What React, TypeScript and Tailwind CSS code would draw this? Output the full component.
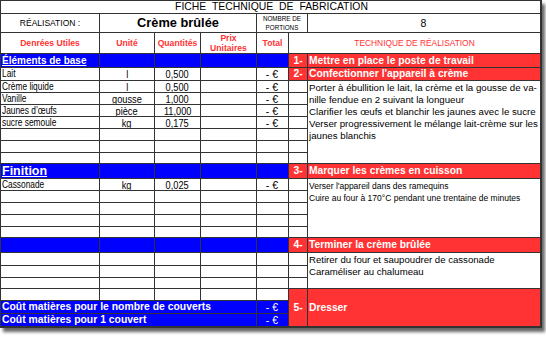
import React from "react";

const cell = "border-r border-b border-[#333] flex items-center overflow-hidden whitespace-nowrap";
const cellR = "border-r-2 border-b border-[#333] flex items-center overflow-hidden whitespace-nowrap";

function blanks(n: number, key: string, extra = "") {
  return Array.from({ length: n }, (_, i) => (
    <div key={key + i} className={`${cell} ${extra}`} />
  ));
}

function blueRow(key: string) {
  return Array.from({ length: 4 }, (_, i) => (
    <div key={key + i} className={`${cell} bg-[#0000ff]`} />
  ));
}

const items: [string, string, string][] = [
  ["Lait", "l", "0,500"],
  ["Crème liquide", "l", "0,500"],
  ["Vanille", "gousse", "1,000"],
  ["Jaunes d’œufs", "pièce", "11,000"],
  ["sucre semoule", "kg", "0,175"],
];

function ItemRow({ it }: { it: [string, string, string] }) {
  return (
    <>
      <div className={`${cell} pl-px text-[10.2px]`}>
        <span className="inline-block origin-left scale-x-[0.82]">{it[0]}</span>
      </div>
      <div className={`${cell} justify-center text-[10.5px]`}>
        <span className="inline-block scale-x-[0.88]">{it[1]}</span>
      </div>
      <div className={`${cell} justify-center text-[10.5px]`}>
        <span className="inline-block scale-x-[0.88]">{it[2]}</span>
      </div>
      <div className={cell} />
      <div className={`${cell} justify-end pr-[10px] text-[10.5px]`}>- €</div>
    </>
  );
}

export default function App() {
  const red = "bg-[#ff3333] text-white font-bold text-[10.3px]";
  return (
    <div className="bg-white w-[546px] h-[340px] font-['Liberation_Sans',Arial,sans-serif] text-black">
      <div
        className="grid w-fit border-l border-t border-[#333] shadow-[3px_4px_3px_rgba(0,0,0,0.6)] grid-cols-[99px_55px_46px_56px_32px_19px_234px] grid-rows-[13px_19px_21px_14px_13px_12px_12px_12px_12px_12px_12px_11px_15px_12px_12px_12px_12px_11px_15px_13px_12px_11px_12px_13px_14px] leading-[12px]"
      >
        {/* Row 1 */}
        <div className={`${cellR} col-span-7 justify-center text-[10.4px] [word-spacing:3px] pl-[2px]`}>
          FICHE TECHNIQUE DE FABRICATION
        </div>

        {/* Row 2 */}
        <div className={`${cell} justify-center text-[8.5px]`}>RÉALISATION :</div>
        <div className={`${cell} col-span-3 justify-center text-[12.8px] font-bold`}>Crème brûlée</div>
        <div className={`${cell} col-span-2 justify-center text-center text-[6.3px] leading-[9px] whitespace-normal`}>
          NOMBRE DE
          <br />
          PORTIONS
        </div>
        <div className={`${cellR} justify-center text-[10.5px] pr-px`}>8</div>

        {/* Row 3 headers */}
        <div className={`${cell} justify-center text-[8.6px] font-bold text-[#ff3333]`}>Denrées Utiles</div>
        <div className={`${cell} justify-center text-[8.6px] font-bold text-[#ff3333]`}>Unité</div>
        <div className={`${cell} justify-center text-[8.6px] font-bold text-[#ff3333]`}>Quantités</div>
        <div className={`${cell} justify-center text-center text-[8.6px] font-bold text-[#ff3333] leading-[10.5px] whitespace-normal`}>
          Prix
          <br />
          Unitaires
        </div>
        <div className={`${cell} justify-center text-[8.6px] font-bold text-[#ff3333]`}>Total</div>
        <div className={`${cellR} col-span-2 justify-center text-[8.4px] text-[#ff3333]`}>TECHNIQUE DE RÉALISATION</div>

        {/* Row 4: Éléments de base */}
        <div className={`${cell} bg-[#0000ff] pl-px text-white font-bold text-[10px] underline`}>Éléments de base</div>
        {blueRow("b1")}
        <div className={`${cell} ${red} justify-center`}>1-</div>
        <div className={`${cellR} ${red} pl-px`}>Mettre en place le poste de travail</div>

        {/* Row 5: Lait */}
        <ItemRow it={items[0]} />
        <div className={`${cell} ${red} justify-center`}>2-</div>
        <div className={`${cellR} ${red} pl-px`}>Confectionner l'appareil à crème</div>

        {/* Row 6 */}
        <ItemRow it={items[1]} />
        <div className={cell} />
        <div className={`${cellR} row-span-7 !items-start pl-px pt-px text-[9.7px]`}>
          <div>
            <div>Porter à ébullition le lait, la crème et la gousse de va-</div>
            <div>nille fendue en 2 suivant la longueur</div>
            <div>Clarifier les œufs et blanchir les jaunes avec le sucre</div>
            <div>Verser progressivement le mélange lait-crème sur les</div>
            <div>jaunes blanchis</div>
          </div>
        </div>
        {/* Rows 7-9 */}
        <ItemRow it={items[2]} />
        <div className={cell} />
        <ItemRow it={items[3]} />
        <div className={cell} />
        <ItemRow it={items[4]} />
        <div className={cell} />
        {/* Rows 10-12 */}
        {blanks(6, "r10")}
        {blanks(6, "r11")}
        {blanks(6, "r12")}

        {/* Row 13: Finition */}
        <div className={`${cell} bg-[#0000ff] pl-px text-white font-bold text-[12.5px] underline`}>Finition</div>
        {blueRow("b2")}
        <div className={`${cell} ${red} justify-center`}>3-</div>
        <div className={`${cellR} ${red} pl-px`}>Marquer les crèmes en cuisson</div>

        {/* Row 14: Cassonade */}
        <ItemRow it={["Cassonade", "kg", "0,025"]} />
        <div className={cell} />
        <div className={`${cellR} row-span-5 !items-start pl-px pt-px text-[8.5px]`}>
          <div>
            <div>Verser l'appareil dans des ramequins</div>
            <div>Cuire au four à 170°C pendant une trentaine de minutes</div>
          </div>
        </div>
        {blanks(6, "r15")}
        {blanks(6, "r16")}
        {blanks(6, "r17")}
        {blanks(6, "r18")}

        {/* Row 19 */}
        <div className={`${cell} bg-[#0000ff]`} />
        {blueRow("b3")}
        <div className={`${cell} ${red} justify-center`}>4-</div>
        <div className={`${cellR} ${red} pl-px`}>Terminer la crème brûlée</div>

        {/* Row 20 */}
        {blanks(6, "r20")}
        <div className={`${cellR} row-span-3 !items-start pl-px pt-px text-[9.6px]`}>
          <div>
            <div>Retirer du four et saupoudrer de cassonade</div>
            <div>Caraméliser au chalumeau</div>
          </div>
        </div>
        {blanks(6, "r21")}
        {blanks(6, "r22")}

        {/* Row 23 */}
        {blanks(5, "r23")}
        <div className={`${cell} border-b-2 row-span-3 ${red} justify-center`}>5-</div>
        <div className={`${cellR} border-b-2 row-span-3 ${red} pl-px`}>Dresser</div>

        {/* Row 24 */}
        <div className={`${cell} col-span-4 bg-[#0000ff] pl-px text-white font-bold text-[10.4px]`}>
          Coût matières pour le nombre de couverts
        </div>
        <div className={`${cell} bg-[#0000ff] text-white justify-end pr-[10px] text-[10.5px]`}>- €</div>

        {/* Row 25 */}
        <div className={`${cell} border-b-2 col-span-4 bg-[#0000ff] pl-px text-white font-bold text-[10.4px]`}>
          Coût matières pour 1 couvert
        </div>
        <div className={`${cell} border-b-2 bg-[#0000ff] text-white justify-end pr-[10px] text-[10.5px]`}>- €</div>
      </div>
    </div>
  );
}
